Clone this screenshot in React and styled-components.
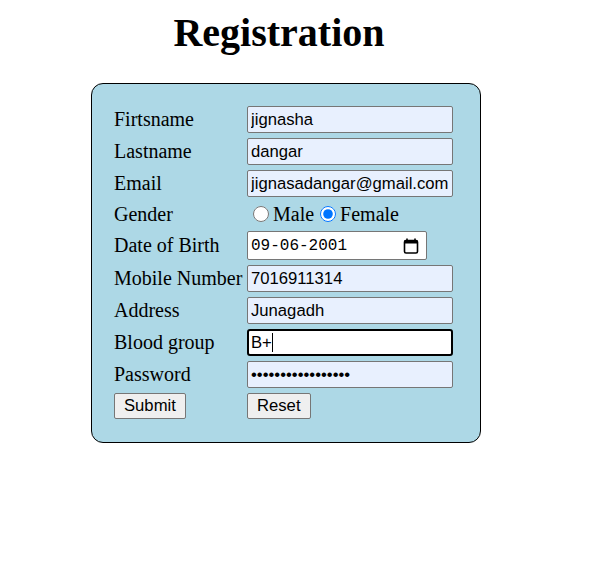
import React from 'react';
import styled, { createGlobalStyle } from 'styled-components';

const GlobalStyle = createGlobalStyle`
  body {
    margin: 8px;
    background: #ffffff;
    font-family: "Liberation Serif", "Times New Roman", serif;
    color: #000;
  }
`;

const Page = styled.div`
  width: 390px;
  margin-left: 83px;
`;

const Title = styled.h1`
  width: 376px;
  margin: 0;
  padding-top: 2px;
  font-size: 40px;
  line-height: 46px;
  font-weight: bold;
  text-align: center;
`;

const Card = styled.form`
  box-sizing: border-box;
  width: 390px;
  margin-top: 27px;
  padding: 22px 0 23px 22px;
  border: 1px solid #000;
  border-radius: 12px;
  background: #add8e6;
`;

const Grid = styled.div`
  display: grid;
  grid-template-columns: 131px 206px;
  column-gap: 2px;
  row-gap: 5px;
  align-items: center;
`;

const Label = styled.span`
  font-size: 20px;
  line-height: 23px;
  white-space: nowrap;
`;

const TextInput = styled.input`
  box-sizing: border-box;
  width: 206px;
  height: 27px;
  margin: 0;
  padding: 0 3px;
  border: ${({ $focused }) => ($focused ? '2px solid #000' : '1px solid #767676')};
  border-radius: ${({ $focused }) => ($focused ? '3px' : '2px')};
  padding-left: ${({ $focused }) => ($focused ? '2px' : '3px')};
  background: ${({ $focused }) => ($focused ? '#ffffff' : '#e8f0fe')};
  font-family: "Liberation Sans", Arial, sans-serif;
  font-size: 16.67px;
  color: #000;
  outline: none;
`;

const FieldWrap = styled.div`
  position: relative;
  width: 206px;
`;

const Caret = styled.span`
  position: absolute;
  left: 25px;
  top: 4px;
  width: 1px;
  height: 19px;
  background: #000;
`;

const Options = styled.div`
  display: flex;
  align-items: center;
  height: 24px;
  font-size: 20px;
  white-space: nowrap;
`;

const Radio = styled.input`
  width: 16px;
  height: 16px;
  margin: 0 4px 0 6px;
`;

const DateField = styled.div`
  box-sizing: border-box;
  display: flex;
  align-items: center;
  justify-content: space-between;
  width: 180px;
  height: 29px;
  padding: 0 7px 0 3px;
  border: 1px solid #767676;
  border-radius: 2px;
  background: #ffffff;
`;

const DateText = styled.input`
  width: 130px;
  margin: 0;
  padding: 0;
  border: none;
  background: transparent;
  font-family: "Liberation Mono", "DejaVu Sans Mono", monospace;
  font-size: 16px;
  color: #000;
  outline: none;
`;

const Button = styled.button`
  justify-self: start;
  height: 26px;
  margin: 0;
  padding: 0 9px;
  border: 1px solid #767676;
  border-radius: 2px;
  background: #efefef;
  font-family: "Liberation Sans", Arial, sans-serif;
  font-size: 16.67px;
  color: #000;
`;

function CalendarIcon() {
  return (
    <svg width="16" height="16" viewBox="0 0 16 16" fill="none">
      <rect x="1.5" y="2.5" width="13" height="12.5" rx="1.5" stroke="#000" strokeWidth="1.6" />
      <rect x="1.5" y="2.5" width="13" height="3" fill="#000" />
      <rect x="3.2" y="0.5" width="1.6" height="3" fill="#000" />
      <rect x="11.2" y="0.5" width="1.6" height="3" fill="#000" />
    </svg>
  );
}

const fields = [
  { label: 'Firtsname', value: 'jignasha' },
  { label: 'Lastname', value: 'dangar' },
  { label: 'Email', value: 'jignasadangar@gmail.com' },
];

const lower = [
  { label: 'Mobile Number', value: '7016911314' },
  { label: 'Address', value: 'Junagadh' },
];

export default function App() {
  return (
    <>
      <GlobalStyle />
      <Page>
        <Title>Registration</Title>
        <Card onSubmit={(e) => e.preventDefault()}>
          <Grid>
            {fields.map((f) => (
              <React.Fragment key={f.label}>
                <Label>{f.label}</Label>
                <TextInput type="text" defaultValue={f.value} />
              </React.Fragment>
            ))}

            <Label>Gender</Label>
            <Options>
              <Radio type="radio" name="gender" />
              Male
              <Radio type="radio" name="gender" defaultChecked />
              Female
            </Options>

            <Label>Date of Birth</Label>
            <DateField>
              <DateText type="text" defaultValue="09-06-2001" />
              <CalendarIcon />
            </DateField>

            {lower.map((f) => (
              <React.Fragment key={f.label}>
                <Label>{f.label}</Label>
                <TextInput type="text" defaultValue={f.value} />
              </React.Fragment>
            ))}

            <Label>Blood group</Label>
            <FieldWrap>
              <TextInput type="text" defaultValue="B+" $focused />
              <Caret />
            </FieldWrap>

            <Label>Password</Label>
            <TextInput type="password" defaultValue="jignasha@12345678" />

            <Button type="submit">Submit</Button>
            <Button type="reset">Reset</Button>
          </Grid>
        </Card>
      </Page>
    </>
  );
}
